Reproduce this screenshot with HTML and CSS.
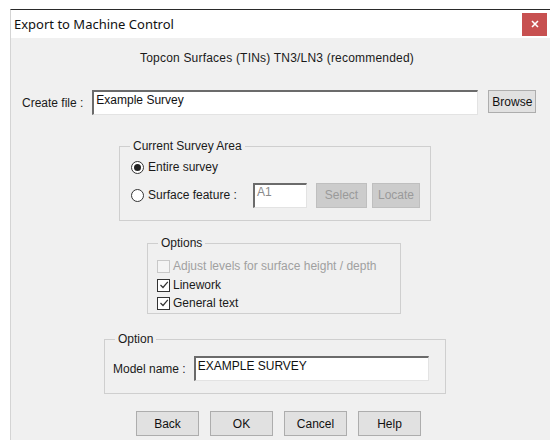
FILE: index.html
```html
<!DOCTYPE html>
<html>
<head>
<meta charset="utf-8">
<title>Export to Machine Control</title>
<link rel="stylesheet" href="styles.css">
</head>
<body>
<div class="window">
  <div class="titlebar">
    <span class="title">Export to Machine Control</span>
    <button class="close" type="button" aria-label="Close">
      <svg width="8" height="8" viewBox="0 0 8 8"><path d="M1 1 L7 7 M7 1 L1 7" stroke="#fff" stroke-width="1.6"/></svg>
    </button>
  </div>
  <div class="client">
    <div class="heading">Topcon Surfaces (TINs) TN3/LN3 (recommended)</div>

    <div class="file-row">
      <label class="lbl">Create file :</label>
      <div class="edit file-edit">Example Survey</div>
      <button class="btn browse" type="button">Browse</button>
    </div>

    <fieldset class="group area">
      <legend>Current Survey Area</legend>
      <div class="radio-row first">
        <span class="radio checked"></span><span>Entire survey</span>
      </div>
      <div class="radio-row second">
        <span class="radio"></span><span class="sf-label">Surface feature :</span>
        <div class="edit small-edit">A1</div>
        <button class="btn disabled select" type="button">Select</button>
        <button class="btn disabled locate" type="button">Locate</button>
      </div>
    </fieldset>

    <fieldset class="group options">
      <legend>Options</legend>
      <div class="check-row disabled-text">
        <span class="check off"></span><span>Adjust levels for surface height / depth</span>
      </div>
      <div class="check-row">
        <span class="check"><svg width="10" height="10" viewBox="0 0 10 10"><path d="M1.5 5 L4 7.5 L8.8 1.8" fill="none" stroke="#333" stroke-width="1.2"/></svg></span><span>Linework</span>
      </div>
      <div class="check-row">
        <span class="check"><svg width="10" height="10" viewBox="0 0 10 10"><path d="M1.5 5 L4 7.5 L8.8 1.8" fill="none" stroke="#333" stroke-width="1.2"/></svg></span><span>General text</span>
      </div>
    </fieldset>

    <fieldset class="group option">
      <legend>Option</legend>
      <div class="model-row">
        <label class="lbl">Model name :</label>
        <div class="edit model-edit">EXAMPLE SURVEY</div>
      </div>
    </fieldset>

    <div class="buttons">
      <button class="btn cmd" type="button">Back</button>
      <button class="btn cmd" type="button">OK</button>
      <button class="btn cmd" type="button">Cancel</button>
      <button class="btn cmd" type="button">Help</button>
    </div>
  </div>
</div>
</body>
</html>
```

FILE: styles.css
```css
html, body {
  margin: 0;
  padding: 0;
  background: #ffffff;
  width: 550px;
  height: 440px;
  overflow: hidden;
}

body {
  font-family: "Liberation Sans", Arial, sans-serif;
  font-size: 12px;
  color: #1a1a1a;
}

.window {
  margin: 9px 0 0 10px;
  border-top: 1px solid #2a2a2a;
  border-left: 1px solid #d4d4d4;
  height: 430px;
  display: flex;
  flex-direction: column;
}

.titlebar {
  height: 28px;
  background: #ffffff;
  display: flex;
  align-items: center;
  justify-content: space-between;
  padding-left: 3px;
  flex: none;
}

.title {
  font-family: "Noto Sans", "Open Sans", sans-serif;
  font-size: 13px;
  color: #111;
}

.close {
  width: 25px;
  height: 23px;
  margin-right: 3px;
  border: 0;
  padding: 0;
  background: #c75050;
  display: flex;
  align-items: center;
  justify-content: center;
}

.client {
  flex: 1;
  background: #f0f0f0;
  display: flex;
  flex-direction: column;
}

.heading {
  margin-top: 13px;
  line-height: 14px;
  text-align: center;
  padding-right: 7px;
  letter-spacing: 0.2px;
}

.file-row {
  margin-top: 25px;
  display: flex;
  align-items: center;
  height: 25px;
  padding-left: 11px;
}

.lbl {
  line-height: 14px;
}

.edit {
  background: #fff;
  box-sizing: border-box;
  border-top: 2px solid #6b6b6b;
  border-left: 2px solid #6b6b6b;
  border-right: 1px solid #e3e3e3;
  border-bottom: 1px solid #e3e3e3;
  height: 25px;
  padding: 1px 0 0 2px;
  line-height: 14px;
  color: #111;
}

.file-edit {
  margin-left: 9px;
  width: 386px;
}

.btn {
  font-family: "Liberation Sans", Arial, sans-serif;
  font-size: 12px;
  color: #111;
  background: #e1e1e1;
  border: 1px solid #adadad;
  box-sizing: border-box;
  padding: 0;
  height: 24px;
}

.browse {
  margin-left: 10px;
  width: 48px;
  height: 23px;
  margin-top: -2px;
}

.group {
  margin: 0;
  border: 1px solid #cfcfcf;
  box-sizing: border-box;
  padding: 0;
  min-width: 0;
}

.group legend {
  padding: 0 3px;
  margin-left: 10px;
  line-height: 14px;
}

.area {
  margin: 24px 0 0 108px;
  width: 312px;
  height: 82px;
}

.radio-row {
  display: flex;
  align-items: center;
  padding-left: 11px;
}

.radio-row.first {
  margin-top: 6px;
  height: 16px;
}

.radio-row.second {
  margin-top: 8px;
  height: 24px;
}

.radio {
  width: 13px;
  height: 13px;
  box-sizing: border-box;
  border: 1px solid #333;
  border-radius: 50%;
  background: #fff;
  margin-right: 4px;
  position: relative;
  flex: none;
}

.radio.checked::after {
  content: "";
  position: absolute;
  left: 2px;
  top: 2px;
  width: 7px;
  height: 7px;
  border-radius: 50%;
  background: #222;
}

.sf-label {
  width: 105px;
}

.small-edit {
  width: 54px;
  height: 25px;
  color: #8a8a8a;
  padding-top: 0;
}

.btn.disabled {
  background: #cccccc;
  border-color: #bfbfbf;
  color: #9a9a9a;
  height: 25px;
}

.select {
  margin-left: 9px;
  width: 51px;
}

.locate {
  margin-left: 5px;
  width: 48px;
}

.options {
  margin: 15px 0 0 136px;
  width: 254px;
  height: 78px;
}

.check-row {
  display: flex;
  align-items: center;
  height: 18px;
  padding-left: 9px;
}

.check {
  width: 13px;
  height: 13px;
  box-sizing: border-box;
  border: 1px solid #333;
  background: #fff;
  margin-right: 3px;
  display: flex;
  align-items: center;
  justify-content: center;
  flex: none;
}

.check.off {
  border-color: #c8c8c8;
  background: #f4f4f4;
}

.disabled-text {
  color: #a0a0a0;
  margin-top: 7px;
  margin-bottom: 1px;
}

.option {
  margin: 18px 0 0 93px;
  width: 342px;
  height: 62px;
}

.model-row {
  display: flex;
  align-items: center;
  padding-left: 8px;
  margin-top: 10px;
}

.model-edit {
  margin-left: 8px;
  width: 235px;
}

.buttons {
  margin: 17px 0 0 125px;
  display: flex;
  gap: 11px;
}

.cmd {
  width: 63px;
  height: 25px;
}
```
